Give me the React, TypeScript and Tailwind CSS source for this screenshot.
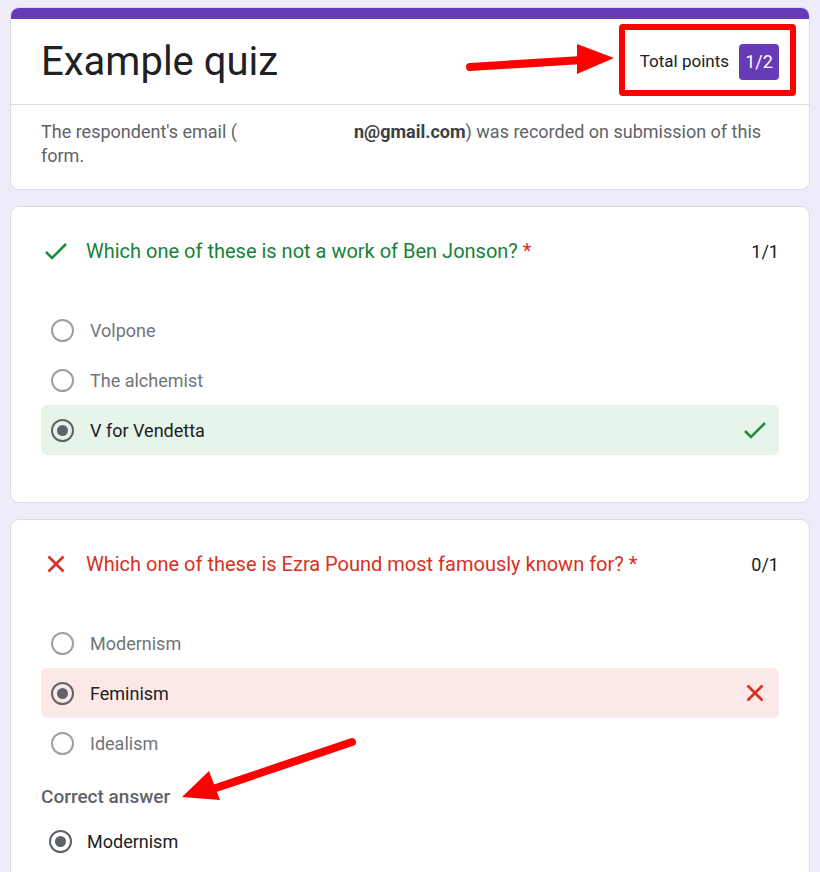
import React from 'react';

// Small icons drawn as strokes so they match the thin Google Forms marks
const CheckIcon = ({ className = '' }: { className?: string }) => (
  <svg viewBox="0 0 24 24" className={className} fill="none" stroke="currentColor" strokeWidth={2.6}>
    <polyline points="2,13 8,19 22,5" />
  </svg>
);

const CrossIcon = ({ className = '' }: { className?: string }) => (
  <svg viewBox="0 0 24 24" className={className} fill="none" stroke="currentColor" strokeWidth={2.6}>
    <line x1="4.5" y1="4.5" x2="19.5" y2="19.5" />
    <line x1="19.5" y1="4.5" x2="4.5" y2="19.5" />
  </svg>
);

const Radio = ({ checked }: { checked: boolean }) => (
  <div
    className={`flex h-[23px] w-[23px] shrink-0 items-center justify-center rounded-full border-2 ${
      checked ? 'border-[#5f6368]' : 'border-[#9aa0a6]'
    }`}
  >
    {checked && <div className="h-[11px] w-[11px] rounded-full bg-[#5f6368]" />}
  </div>
);

type Option = { label: string; state?: 'right' | 'wrong' };

const OptionRow = ({ option }: { option: Option }) => {
  const selected = !!option.state;
  const bg = option.state === 'right' ? 'bg-[#e6f4ea]' : option.state === 'wrong' ? 'bg-[#fce8e6]' : '';
  return (
    <div className={`flex h-[50px] items-center rounded-[6px] pl-[10px] pr-[12px] ${bg}`}>
      <Radio checked={selected} />
      <span className={`ml-[16px] flex-1 text-[18px] ${selected ? 'text-[#202124]' : 'text-[#70757a]'}`}>
        {option.label}
      </span>
      {option.state === 'right' && <CheckIcon className="h-6 w-6 text-[#1e8e3e]" />}
      {option.state === 'wrong' && <CrossIcon className="h-6 w-6 text-[#d93025]" />}
    </div>
  );
};

const QuestionCard = ({
  correct,
  title,
  score,
  options,
  children,
}: {
  correct: boolean;
  title: string;
  score: string;
  options: Option[];
  children?: React.ReactNode;
}) => (
  <div className="rounded-[9px] border border-[#dadce0] bg-white px-[30px] pb-[47px] pt-[29px]">
    <div className="flex h-[30px] items-center">
      <div className="w-[45px] pl-[3px]">
        {correct ? (
          <CheckIcon className="h-6 w-6 text-[#1e8e3e]" />
        ) : (
          <CrossIcon className="h-6 w-6 text-[#d93025]" />
        )}
      </div>
      <div className={`flex-1 text-[20px] ${correct ? 'text-[#188038]' : 'text-[#d93025]'}`}>
        {title} <span className="text-[#d93025]">*</span>
      </div>
      <div className="text-[18px] text-[#202124]">{score}</div>
    </div>
    <div className="mt-[39px] flex flex-col">
      {options.map((o) => (
        <OptionRow key={o.label} option={o} />
      ))}
    </div>
    {children}
  </div>
);

export default function App() {
  return (
    <div className="relative flex h-[872px] flex-col gap-[16px] overflow-hidden bg-[#f0ebf8] px-[10px] pt-[7px] font-['Roboto',sans-serif]">
      {/* header card */}
      <div className="shrink-0 overflow-hidden rounded-[9px] border border-[#dadce0] bg-white">
        <div className="h-[11px] bg-[#673ab7]" />
        <div className="flex h-[86px] items-center justify-between border-b border-[#dadce0] px-[30px]">
          <h1 className="text-[40px] leading-none text-[#202124]">Example quiz</h1>
          <div className="flex items-center gap-[10px]">
            <span className="text-[17px] text-[#202124]">Total points</span>
            <span className="flex h-[36px] w-[40px] items-center justify-center rounded-[4px] bg-[#673ab7] text-[18px] text-white">
              1/2
            </span>
          </div>
        </div>
        <p className="px-[30px] pb-[21px] pt-[15px] text-[18px] leading-[24px] text-[#5f6368]">
          The respondent's email (<span className="inline-block w-[117px]" />
          <b className="font-bold text-[#3c4043]">n@gmail.com</b>) was recorded on submission of this form.
        </p>
      </div>

      <QuestionCard
        correct
        title="Which one of these is not a work of Ben Jonson?"
        score="1/1"
        options={[{ label: 'Volpone' }, { label: 'The alchemist' }, { label: 'V for Vendetta', state: 'right' }]}
      />

      <QuestionCard
        correct={false}
        title="Which one of these is Ezra Pound most famously known for?"
        score="0/1"
        options={[{ label: 'Modernism' }, { label: 'Feminism', state: 'wrong' }, { label: 'Idealism' }]}
      >
        <div className="mt-[17px] text-[19px] font-medium leading-[24px] text-[#5f6368]">Correct answer</div>
        <div className="mt-[10px] flex h-[44px] items-center pl-[8px]">
          <Radio checked />
          <span className="ml-[15px] text-[18px] text-[#202124]">Modernism</span>
        </div>
      </QuestionCard>

      {/* annotation overlays */}
      <div className="pointer-events-none absolute left-[619px] top-[24px] h-[72px] w-[177px] rounded-[4px] border-[6px] border-[#ff0000]" />
      <svg className="pointer-events-none absolute left-0 top-0 h-[872px] w-[820px]" viewBox="0 0 820 872">
        <line x1="470" y1="67" x2="582" y2="60" stroke="#ff0000" strokeWidth="8" strokeLinecap="round" />
        <polygon points="577,44 614,58 577,74" fill="#ff0000" />
        <line x1="352" y1="742" x2="210" y2="790" stroke="#ff0000" strokeWidth="8" strokeLinecap="round" />
        <polygon points="209,771 182,797 220,800" fill="#ff0000" />
      </svg>
    </div>
  );
}
